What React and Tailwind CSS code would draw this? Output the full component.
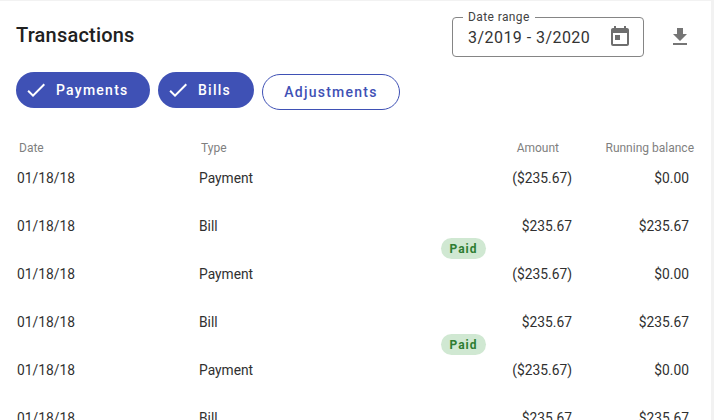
import React from "react";
import { MdToday, MdFileDownload, MdCheck } from "react-icons/md";

const rows = [
  { d: "01/18/18", t: "Payment", a: "($235.67)", b: "$0.00" },
  { d: "01/18/18", t: "Bill", a: "$235.67", b: "$235.67", paid: true },
  { d: "01/18/18", t: "Payment", a: "($235.67)", b: "$0.00" },
  { d: "01/18/18", t: "Bill", a: "$235.67", b: "$235.67", paid: true },
  { d: "01/18/18", t: "Payment", a: "($235.67)", b: "$0.00" },
  { d: "01/18/18", t: "Bill", a: "$235.67", b: "$235.67" },
];

function Chip({ children, w }) {
  return (
    <div className={`flex h-9 items-center rounded-full bg-[#3f51b5] pl-2 text-white ${w}`}>
      <MdCheck className="text-[24px]" />
      <span className="ml-2 text-[14px] font-medium leading-none tracking-[1.25px]">{children}</span>
    </div>
  );
}

export default function App() {
  return (
    <div className="h-[420px] w-[714px] overflow-hidden bg-[#f2f2f2] font-['Roboto',sans-serif]">
      <div className="mt-px h-[419px] w-[711px] overflow-hidden bg-white">
        <div className="flex items-start pl-4 pt-4">
          <h1 className="mt-[5px] w-[118px] text-[20px] font-medium leading-[26px] tracking-[0.2px] text-[#212121]">Transactions</h1>
          <div className="relative ml-[318px] flex h-10 w-[192px] items-center rounded border border-[#858585] pl-[15px]">
            <span className="absolute -top-[8px] left-[10px] bg-white px-[5px] text-[12px] leading-[14px] tracking-[0.4px] text-[#424242]">Date range</span>
            <span className="pt-[2px] text-[16px] leading-none tracking-[0.45px] text-[#333333]">3/2019 - 3/2020</span>
            <MdToday className="ml-[18px] text-[24px] text-[#6e6e6e]" />
          </div>
          <MdFileDownload className="ml-6 mt-2 text-[24px] text-[#757575]" />
        </div>
        <div className="mt-[15px] flex items-start gap-2 pl-4">
          <Chip w="w-[134px]">Payments</Chip>
          <Chip w="w-[96px]">Bills</Chip>
          <div className="mt-[2px] flex h-9 w-[138px] items-center justify-center rounded-full border border-[#3f51b5] text-[14px] font-medium leading-none tracking-[1.25px] text-[#3f51b5]">
            Adjustments
          </div>
        </div>
        <div className="mt-[30px] flex h-[16px] items-center text-[12px] leading-4 text-[#7f7f7f]">
          <span className="w-[201px] pl-[19px]">Date</span>
          <span className="w-[200px] pl-0">Type</span>
          <span className="w-[158px] text-right">Amount</span>
          <span className="w-[135px] text-right">Running balance</span>
        </div>
        <div className="mt-[6px]">
          {rows.map((r, i) => (
            <div key={i} className="relative flex h-12 items-start pt-[6px] text-[13.8px] leading-[20px] text-[#303030]">
              <span className="w-[199px] pl-[17px]">{r.d}</span>
              <span className="w-[200px]">{r.t}</span>
              <span className="w-[173px] text-right">{r.a}</span>
              <span className="w-[117px] text-right">{r.b}</span>
              {r.paid && (
                <span className="absolute left-[441px] top-[28px] flex h-[21px] w-[45px] items-center justify-center rounded-full bg-[#d0e8d2] text-[12px] font-bold tracking-[1px] text-[#2e7d32]">
                  Paid
                </span>
              )}
            </div>
          ))}
        </div>
      </div>
    </div>
  );
}
